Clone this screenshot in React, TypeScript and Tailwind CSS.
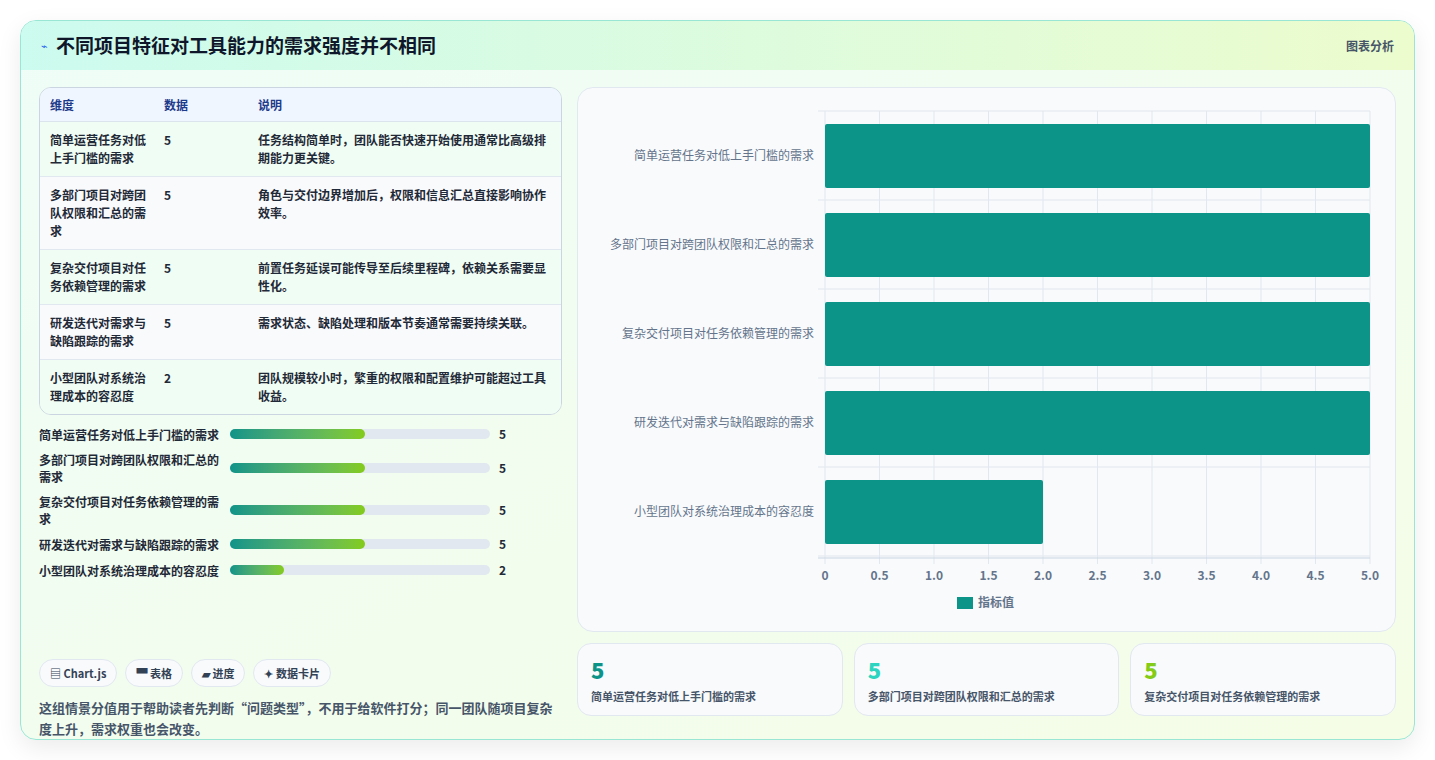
import React from "react";

const rows = [
  ["简单运营任务对低上手门槛的需求", 5, "任务结构简单时，团队能否快速开始使用通常比高级排期能力更关键。", "简单运营任务对低\n上手门槛的需求"],
  ["多部门项目对跨团队权限和汇总的需求", 5, "角色与交付边界增加后，权限和信息汇总直接影响协作效率。", "多部门项目对跨团\n队权限和汇总的需\n求"],
  ["复杂交付项目对任务依赖管理的需求", 5, "前置任务延误可能传导至后续里程碑，依赖关系需要显性化。", "复杂交付项目对任\n务依赖管理的需求"],
  ["研发迭代对需求与缺陷跟踪的需求", 5, "需求状态、缺陷处理和版本节奏通常需要持续关联。", "研发迭代对需求与\n缺陷跟踪的需求"],
  ["小型团队对系统治理成本的容忍度", 2, "团队规模较小时，繁重的权限和配置维护可能超过工具收益。", "小型团队对系统治\n理成本的容忍度"],
] as const;

const font = { fontFamily: '"Noto Sans CJK SC", "Noto Sans", sans-serif' };

function Chart() {
  const x0 = 247, w = 545;
  const ticks = ["0", "0.5", "1.0", "1.5", "2.0", "2.5", "3.0", "3.5", "4.0", "4.5", "5.0"];
  return (
    <svg width="817" height="544" viewBox="0 0 817 544" style={font}>
      {ticks.map((t, i) => (
        <g key={t}>
          <line x1={x0 + i * 54.5} x2={x0 + i * 54.5} y1={23} y2={476} stroke="#e2e8f0" />
          <text x={x0 + i * 54.5} y={492} textAnchor="middle" fontSize="12" fontWeight="700" fill="#64748b">{t}</text>
        </g>
      ))}
      {[0, 1, 2, 3, 4, 5].map((i) => (
        <line key={i} x1={240} x2={792} y1={23 + i * 89} y2={23 + i * 89} stroke="#e2e8f0" />
      ))}
      <line x1={240} x2={792} y1={470} y2={470} stroke="#cbd5e1" />
      {rows.map((r, i) => (
        <g key={i}>
          <text x={236} y={23 + i * 89 + 49} textAnchor="end" fontSize="12" fill="#64748b">{r[0]}</text>
          <rect x={x0} y={23 + i * 89 + 13} width={(Number(r[1]) / 5) * w} height={64} rx={2} fill="#0d9488" />
        </g>
      ))}
      <rect x={379} y={509} width={16} height={12} fill="#0d9488" />
      <text x={400} y={519} fontSize="12" fontWeight="700" fill="#64748b">指标值</text>
    </svg>
  );
}

export default function App() {
  return (
    <div className="w-[1435px] h-[760px] bg-white pt-[20px] pl-[20px]" style={font}>
      <div className="w-[1395px] h-[720px] rounded-[16px] border border-[#99e6d4] overflow-hidden shadow-[0_8px_24px_rgba(0,0,0,0.08)] bg-gradient-to-br from-[#effdf8] to-[#f5fde6] flex flex-col">
        <div className="h-[55px] flex items-center justify-between px-[20px] bg-gradient-to-r from-[#ccfbef] to-[#ecfccd]">
          <div className="flex items-center gap-[8px]">
            <span className="text-[#2563eb] text-[11px]">⌁</span>
            <span className="text-[19px] font-bold text-[#0f172a]">不同项目特征对工具能力的需求强度并不相同</span>
          </div>
          <span className="text-[12px] font-bold text-[#475569]">图表分析</span>
        </div>
        <div className="flex gap-[15px] px-[18px] pt-[17px]">
          <div className="w-[524px] flex flex-col">
            <div className="rounded-[12px] border border-[#cbd5e1] overflow-hidden text-[12px]">
              <div className="flex h-[34px] items-center bg-[#eff6ff] text-[#1e3a8a] font-bold border-b border-[#dbe3ec]">
                <div className="w-[124px] pl-[10px]">维度</div>
                <div className="w-[94px]">数据</div>
                <div>说明</div>
              </div>
              {rows.map((r, i) => (
                <div key={i} className={`flex py-[9px] leading-[18px] font-bold text-[#1f2937] border-b border-[#e2e8f0] last:border-b-0 ${i % 2 ? "bg-[#f8fafc]" : "bg-[#f0fdf4]"}`}>
                  <div className="w-[124px] pl-[10px] whitespace-pre-line">{r[3]}</div>
                  <div className="w-[94px]">{r[1]}</div>
                  <div className="flex-1 pr-[12px]">{r[2]}</div>
                </div>
              ))}
            </div>
            <div className="flex flex-col gap-[8px] mt-[10px] text-[12px] font-bold text-[#1f2937]">
              {rows.map((r, i) => (
                <div key={i} className="flex items-center">
                  <div className="w-[183px] leading-[17px]">{r[0]}</div>
                  <div className="ml-[8px] w-[260px] h-[10px] rounded-full bg-[#e2e8f0]">
                    <div className="h-[10px] rounded-full bg-gradient-to-r from-[#0d9488] to-[#84cc16]" style={{ width: `${(Number(r[1]) / 5) * 52}%` }} />
                  </div>
                  <div className="ml-[9px]">{r[1]}</div>
                </div>
              ))}
            </div>
            <div className="flex gap-[8px] mt-[80px] text-[11px] font-bold text-[#334155]">
              {["▤ Chart.js", "▀ 表格", "▰ 进度", "✦ 数据卡片"].map((c) => (
                <div key={c} className="h-[28px] px-[10px] rounded-full border border-[#e2e8f0] bg-[#f8fafc] flex items-center">{c}</div>
              ))}
            </div>
            <div className="mt-[10px] text-[13px] leading-[21px] font-bold text-[#475569]">
              这组情景分值用于帮助读者先判断“问题类型”，不用于给软件打分；同一团队随项目复杂度上升，需求权重也会改变。
            </div>
          </div>
          <div className="flex-1 flex flex-col gap-[11px]">
            <div className="h-[545px] rounded-[16px] border border-[#e2e8f0] bg-[#f8fafc] overflow-hidden">
              <Chart />
            </div>
            <div className="flex gap-[11px]">
              {[["#0d9488", 0], ["#2dd4bf", 1], ["#84cc16", 2]].map(([c, i]) => (
                <div key={i as number} className="flex-1 h-[73px] rounded-[14px] border border-[#e2e8f0] bg-[#f8fafc] px-[13px] pt-[12px]">
                  <div className="text-[22px] font-black leading-[26px]" style={{ color: c as string }}>5</div>
                  <div className="text-[11px] font-bold text-[#475569] mt-[6px]">{rows[i as number][0]}</div>
                </div>
              ))}
            </div>
          </div>
        </div>
      </div>
    </div>
  );
}
